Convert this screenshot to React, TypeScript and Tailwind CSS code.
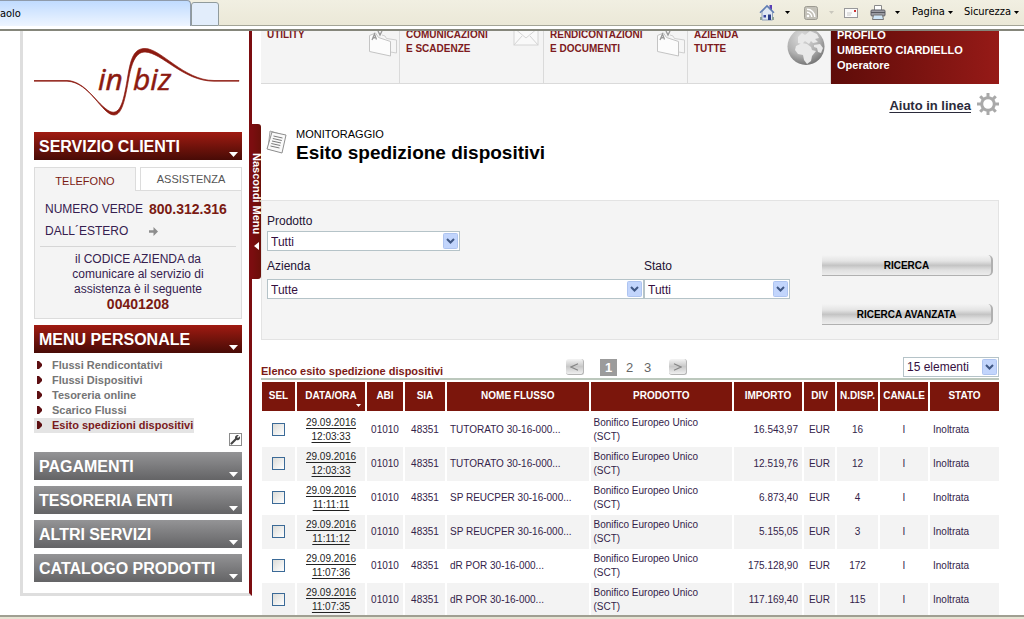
import React from "react";

const rows = [
  ["29.09.2016", "12:03:33", "TUTORATO 30-16-000...", "16.543,97", "16"],
  ["29.09.2016", "12:03:33", "TUTORATO 30-16-000...", "12.519,76", "12"],
  ["29.09.2016", "11:11:11", "SP REUCPER 30-16-000...", "6.873,40", "4"],
  ["29.09.2016", "11:11:12", "SP REUCPER 30-16-000...", "5.155,05", "3"],
  ["29.09.2016", "11:07:36", "dR POR 30-16-000...", "175.128,90", "172"],
  ["29.09.2016", "11:07:35", "dR POR 30-16-000...", "117.169,40", "115"],
];

function Caret({ className = "" }: { className?: string }) {
  return (
    <svg className={className} width="5" height="3" viewBox="0 0 5 3" aria-hidden="true">
      <path d="M0 0h5L2.5 3z" fill="currentColor" />
    </svg>
  );
}

function BrowserBar() {
  return (
    <header className="flex h-[31px] shrink-0 flex-col border-b-2 border-[#85867b] bg-white font-['DejaVu_Sans_Condensed','DejaVu_Sans',sans-serif] text-[11px] text-black">
      <div className="flex h-[26px] items-stretch bg-gradient-to-b from-[#f1efe2] to-[#ebe8d7]">
        <div className="flex w-[191px] items-center rounded-tr border-t border-r border-[#8f9bab] bg-gradient-to-b from-[#c0dbff] to-[#eef5ff] pt-[2px]">
          aolo
        </div>
        <button aria-label="Nuova scheda" className="mt-[2px] h-[24px] w-[28px] rounded-t-[3px] border border-[#919b9c] bg-[#e2edfb]" />
        <div className="flex flex-1 items-center justify-end border-b border-[#a3a497] pr-[5px]">
          <button aria-label="Pagina iniziale" className="flex items-center gap-[10px]">
            <svg width="16" height="17" viewBox="0 0 16 17">
              <path d="M10.5 1h2.500v5h-2.500z" fill="#5a3fb5" />
              <path d="M3 8l5-5.500L13.500 8v8H3z" fill="#dfe7f2" stroke="#8fa0b8" />
              <path d="M1 8.800L8 1.800l7 7" fill="none" stroke="#5f7db5" strokeWidth="1.500" />
              <path d="M4.500 11h2.500v2.500H4.500z" fill="#34439c" />
              <path d="M9 10.500h3V16H9z" fill="#2c3f87" />
              <path d="M1 13h2v3H1zM13 13h2v3h-2z" fill="#8fa396" />
            </svg>
            <Caret />
          </button>
          <button aria-label="Feed" className="ml-[14px] flex items-center gap-[11px]">
            <svg width="14" height="14" viewBox="0 0 14 14">
              <rect x=".5" y=".5" width="13" height="13" rx="2" fill="#c3c1b8" stroke="#9d9b92" />
              <circle cx="4" cy="10" r="1.300" fill="#fff" />
              <path d="M3 6.300A4.700 4.700 0 0 1 7.700 11M3 3.200A7.800 7.800 0 0 1 10.800 11" fill="none" stroke="#fff" strokeWidth="1.400" />
            </svg>
            <Caret className="text-[#c9c7bd]" />
          </button>
          <button aria-label="Leggi posta" className="ml-[10px]">
            <svg width="14" height="10" viewBox="0 0 14 10">
              <rect x=".5" y=".5" width="13" height="9" fill="#fbfbfb" stroke="#98989a" />
              <rect x="10" y="2" width="2" height="2" fill="#c33" />
              <path d="M3 5h5M3 7h4" stroke="#c8c8c8" />
            </svg>
          </button>
          <button aria-label="Stampa" className="ml-[12px] flex items-center gap-[9px]">
            <svg width="16" height="15" viewBox="0 0 16 15">
              <path d="M4.500 5V.500h7V5" fill="#fff" stroke="#8a8a8a" />
              <rect x="1" y="5" width="14" height="6" rx="1" fill="#9a9ba2" stroke="#5f6168" />
              <path d="M1 7.500h14" stroke="#55575e" />
              <path d="M3.500 10h9l1 4.500h-11z" fill="#cfe6f7" stroke="#777" />
            </svg>
            <Caret />
          </button>
          <button className="ml-[12px] flex items-center gap-[3px]">
            Pagina <Caret />
          </button>
          <button className="ml-[11px] flex items-center gap-[3px]">
            Sicurezza <Caret />
          </button>
        </div>
      </div>
    </header>
  );
}

function Logo() {
  return (
    <svg className="h-[101px] w-full" viewBox="0 0 208 101" role="img" aria-label="in biz">
      <path
        d="M-1 49.500H33C52 50 63 74 76 80.500C87 85 90 68 94 44C97 27 100 17.500 111 17.500C127 17.500 150 49.500 180 49.500H205V50.200H180C149 50.200 128 21.500 111 21C102 21 98 31 95 46C91 69 88 84 80 84C68 84 56 51 33 50.200H-1Z"
        fill="#8c1a10"
        stroke="#8c1a10"
        strokeWidth=".7"
      />
      <g
        fill="#8c1a10"
        stroke="#8c1a10"
        strokeWidth=".5"
        fontFamily="'Open Sans', 'Noto Sans', sans-serif"
        fontStyle="italic"
        fontSize="30"
      >
        <text x="64" y="59">in</text>
        <text x="99" y="59">biz</text>
      </g>
    </svg>
  );
}

function MenuHeader({ children, tone }: { children: React.ReactNode; tone: "red" | "gray" }) {
  const colors = tone === "red" ? "from-[#a11b12] to-[#480b06]" : "from-[#949496] to-[#646466]";
  return (
    <button className={`flex h-[28px] w-full items-center justify-between bg-gradient-to-b pt-px pr-[4px] pl-[5px] text-left text-[16px] font-bold text-white ${colors}`}>
      {children}
      <svg className="mb-[3px] self-end" width="9" height="5" viewBox="0 0 9 5" aria-hidden="true">
        <path d="M0 0h9L4.500 5z" fill="#fff" />
      </svg>
    </button>
  );
}

function Sidebar() {
  const links = ["Flussi Rendicontativi", "Flussi Dispositivi", "Tesoreria online", "Scarico Flussi"];
  return (
    <aside className="w-[232px] shrink-0 border-r-[3px] border-b-[3px] border-l-[3px] border-[#dedede] border-r-[#7c0d10] pr-[7px] pb-[11px] pl-[11px]">
      <Logo />
      <MenuHeader tone="red">SERVIZIO CLIENTI</MenuHeader>
      <section className="mt-[7px] text-[12px] text-[#35204f]">
        <div className="flex h-[24px] text-[11px]">
          <button className="w-[102px] border-t border-r border-l border-[#dcdcdc] bg-[#f4f4f4] pt-[3px] text-[#7a1a12]">TELEFONO</button>
          <div className="w-[4px] border-b border-[#dcdcdc]" />
          <button className="flex-1 border border-[#dcdcdc] bg-white text-[#555]">ASSISTENZA</button>
        </div>
        <div className="border-r border-b border-l border-[#dcdcdc] bg-[#f4f4f4] px-[5px] pt-[7px] pb-[5px]">
          <div className="flex h-[22px] items-center gap-[6px] pl-[5px]">
            NUMERO VERDE <strong className="text-[14px] text-[#7a1a12]">800.312.316</strong>
          </div>
          <div className="flex h-[22px] items-center pl-[5px]">
            <span className="w-[104px]">DALL´ESTERO</span>
            <svg width="9" height="9" viewBox="0 0 9 9" aria-hidden="true">
              <path d="M0 3.300h4.500V0L9 4.500 4.500 9V5.700H0z" fill="#8d8d8d" />
            </svg>
          </div>
          <p className="mt-[4px] border-t border-[#d6d6d6] pt-[5px] text-center leading-[15px]">
            il CODICE AZIENDA da
            <br />
            comunicare al servizio di
            <br />
            assistenza è il seguente
            <br />
            <strong className="text-[14px] text-[#7a1a12]">00401208</strong>
          </p>
        </div>
      </section>
      <div className="mt-[6px]">
        <MenuHeader tone="red">MENU PERSONALE</MenuHeader>
      </div>
      <ul className="mt-[5px] text-[11px] leading-[15px] font-bold text-[#757575]">
        {links.map((l) => (
          <li key={l} className="flex items-start pl-[3px]">
            <Bullet />
            <a href="#">{l}</a>
          </li>
        ))}
        <li className="flex w-fit items-start bg-[#e4e4e4] pr-[1px] pl-[3px] text-[#7a1a1c]">
          <Bullet />
          <a href="#" aria-current="page">Esito spedizioni dispositivi</a>
        </li>
      </ul>
      <div className="flex h-[19px] justify-end">
        <button aria-label="Personalizza menu" className="h-[13px]">
          <svg width="13" height="13" viewBox="0 0 13 13">
            <rect x=".5" y=".5" width="12" height="12" fill="#fff" stroke="#8c8c8c" />
            <path d="M2.500 10.500L7 6" stroke="#444" strokeWidth="2.200" strokeLinecap="round" />
            <path d="M10.800 3.200L9 5 8 4l1.800-1.800C8.300 1.400 6 2.300 6 4.600 6 6.600 8 7.600 9.500 7c1.400-.6 2-2.300 1.300-3.800z" fill="#444" />
          </svg>
        </button>
      </div>
      <nav className="flex flex-col gap-[6px]">
        <MenuHeader tone="gray">PAGAMENTI</MenuHeader>
        <MenuHeader tone="gray">TESORERIA ENTI</MenuHeader>
        <MenuHeader tone="gray">ALTRI SERVIZI</MenuHeader>
        <MenuHeader tone="gray">CATALOGO PRODOTTI</MenuHeader>
      </nav>
    </aside>
  );
}

function Bullet() {
  return (
    <svg className="mt-[3px] mr-[10px] shrink-0" width="5" height="8" viewBox="0 0 5 8" aria-hidden="true">
      <path d="M0 0h2L5 3v2L2 8H0z" fill="#5d0f12" />
    </svg>
  );
}

function FolderIcon() {
  return (
    <svg className="shrink-0" width="30" height="30" viewBox="0 0 30 30" aria-hidden="true">
      <path d="M14 7l3 1 1.500 2.500L28.500 12v13l-6-1" fill="#f6f6f6" stroke="#cfcfcf" />
      <path d="M1.500 7.500l6-2.500 3 4.500 12 4V28L1.500 23.500z" fill="#fcfcfc" stroke="#c4c4c4" />
      <path d="M4 12l2.500-6 2 5.500M5 10l3-.6M10 3l2 4 2-4" fill="none" stroke="#999" strokeWidth="1.300" />
    </svg>
  );
}

function EnvelopeIcon() {
  return (
    <svg className="shrink-0" width="26" height="20" viewBox="0 0 26 20" aria-hidden="true">
      <rect x="1" y="0" width="24" height="17" fill="#f9f9f9" stroke="#d4d4d4" />
      <path d="M1 0l12 10L25 0M1 17l8-9M25 17l-8-9" fill="none" stroke="#d4d4d4" />
    </svg>
  );
}

function GlobeIcon() {
  return (
    <svg width="38" height="38" viewBox="0 0 38 38" aria-hidden="true">
      <defs>
        <radialGradient id="globe" cx=".4" cy=".25" r=".8">
          <stop offset="0" stopColor="#dcdcdc" />
          <stop offset=".6" stopColor="#b0b0b0" />
          <stop offset="1" stopColor="#6d6d6d" />
        </radialGradient>
      </defs>
      <circle cx="19" cy="18.500" r="18.500" fill="url(#globe)" />
      <path d="M11 9l4-4 3 2 5-4 7 3 2 4-4 1 3 3-5 1-2-2-2 3-4-3-3 3-4-1zM9 18l6-3 5 1 4 3 1 3 4 1-4 5-1 5-4 3-3-4-1-5-5-1-3-4zM27 17l6-1 3 4-2 5-3-1-1-4-3-1z" fill="#e9e9e9" />
    </svg>
  );
}

function NavTile({ lines, icon, className }: { lines: string[]; icon?: React.ReactNode; className: string }) {
  return (
    <a href="#" className={`flex justify-between border-r border-b border-[#dadada] pl-[6px] ${className}`}>
      <span>
        {lines.map((l) => (
          <span key={l} className="block">{l}</span>
        ))}
      </span>
      {icon}
    </a>
  );
}

function TopNav() {
  return (
    <div className="-mt-[3px] flex h-[56px] overflow-hidden bg-[#f4f4f4] text-[10px] leading-[14px] font-bold text-[#7d1a20]">
      <NavTile lines={["UTILITY"]} icon={<FolderIcon />} className="w-[139px] pr-px" />
      <NavTile lines={["COMUNICAZIONI", "E SCADENZE"]} icon={<EnvelopeIcon />} className="w-[144px] pr-[4px]" />
      <NavTile lines={["RENDICONTAZIONI", "E DOCUMENTI"]} icon={<FolderIcon />} className="w-[144px] pr-px" />
      <NavTile lines={["AZIENDA", "TUTTE"]} icon={<GlobeIcon />} className="flex-1 pr-[5px]" />
      <div className="w-[168px] bg-gradient-to-r from-[#5e0c09] to-[#961a17] pl-[6px] text-[11px] leading-[15px] text-white">
        PROFILO
        <br />
        UMBERTO CIARDIELLO
        <br />
        Operatore
      </div>
    </div>
  );
}

function Select({ id, label, value, options, className = "" }: { id: string; label?: string; value: string; options: string[]; className?: string }) {
  return (
    <div className={`relative ${className}`}>
      <select
        id={id}
        aria-label={label}
        defaultValue={value}
        className="block h-[20px] w-full appearance-none border border-[#b5c3c8] bg-white pl-[3px] text-[12px] text-[#35103f]"
      >
        {options.map((o) => (
          <option key={o}>{o}</option>
        ))}
      </select>
      <svg className="pointer-events-none absolute top-[2px] right-[2px]" width="15" height="16" viewBox="0 0 15 16" aria-hidden="true">
        <rect x=".5" y=".5" width="14" height="15" rx="1" fill="#c2d5fc" stroke="#aec4f0" />
        <path d="M4 6l3.500 3.500L11 6" fill="none" stroke="#3f5784" strokeWidth="2" />
      </svg>
    </div>
  );
}

function SilverButton({ children }: { children: React.ReactNode }) {
  return (
    <button className="h-[21px] w-full rounded-r-[5px] border-r-2 border-b border-[#b0b0b0] bg-[linear-gradient(#f4f4f4,#e4e4e4_30%,#c4c4c4_52%,#e0e0e0_75%,#ececec)] pt-px text-[10px] font-bold text-black">
      {children}
    </button>
  );
}

function Filters() {
  return (
    <form className="mt-[36px] flex items-end border border-[#e3e3e3] bg-[#f4f4f4] pt-[10px] pr-[5px] pl-[5px] text-[12px] leading-[20px] text-[#231233]">
      <div className="flex-1 pb-[40px]">
        <label htmlFor="prodotto" className="block">Prodotto</label>
        <Select id="prodotto" value="Tutti" options={["Tutti"]} className="w-[193px]" />
        <div className="mt-[5px] flex">
          <div className="flex-1">
            <label htmlFor="azienda" className="block pb-[3px]">Azienda</label>
            <Select id="azienda" value="Tutte" options={["Tutte"]} />
          </div>
          <div className="w-[146px]">
            <label htmlFor="stato" className="block pb-[3px]">Stato</label>
            <Select id="stato" value="Tutti" options={["Tutti"]} />
          </div>
        </div>
      </div>
      <div className="ml-[32px] flex w-[171px] flex-col gap-[28px] pb-[14px]">
        <SilverButton>RICERCA</SilverButton>
        <SilverButton>RICERCA AVANZATA</SilverButton>
      </div>
    </form>
  );
}

function PagerArrow({ label, d }: { label: string; d: string }) {
  return (
    <button aria-label={label} className="flex h-[16px] w-[18px] items-center justify-center rounded-[3px] border-r border-b border-[#b5b5b5] bg-[linear-gradient(#f4f4f4,#c8c8c8_50%,#efefef)]">
      <svg width="9" height="8" viewBox="0 0 9 8">
        <path d={d} fill="none" stroke="#858585" strokeWidth="1.200" />
      </svg>
    </button>
  );
}

function Th({ children }: { children: React.ReactNode }) {
  return <th className="h-[31px] border-b-2 border-l-2 border-white bg-[#7b160c] p-0 text-center whitespace-nowrap first:border-l">{children}</th>;
}

function Results() {
  const cell = "h-[34px] border-l-2 border-white p-0 first:border-l";
  return (
    <section className="mt-[17px]">
      <div className="flex h-[23px] items-start border-b-2 border-[#bcc8bd]">
        <h2 className="w-[305px] pt-[7px] text-[11px] leading-[14px] font-bold text-[#7d1a16]">Elenco esito spedizione dispositivi</h2>
        <nav aria-label="Pagine" className="flex items-center gap-[16px] pt-[2px] text-[13px] leading-[17px] text-[#666]">
          <PagerArrow label="Pagina precedente" d="M8 .800L1 4l7 3.200" />
          <div className="flex gap-[7px]">
            <a href="#" aria-current="page" className="w-[17px] bg-[#9b9b9b] text-center font-bold text-white">1</a>
            <a href="#" className="w-[11px] text-center">2</a>
            <a href="#" className="w-[11px] text-center">3</a>
          </div>
          <PagerArrow label="Pagina successiva" d="M1 .800L8 4 1 7.200" />
        </nav>
        <Select id="elementi" label="Elementi per pagina" value="15 elementi" options={["15 elementi"]} className="ml-auto w-[96px]" />
      </div>
      <table className="mt-[2px] w-full table-fixed border-separate border-spacing-0 text-[10px] leading-[14px] text-[#33234a]">
        <colgroup>
          <col className="w-[34px]" />
          <col className="w-[70px]" />
          <col className="w-[38px]" />
          <col className="w-[42px]" />
          <col />
          <col />
          <col className="w-[70px]" />
          <col className="w-[33px]" />
          <col className="w-[43px]" />
          <col className="w-[50px]" />
          <col className="w-[71px]" />
        </colgroup>
        <thead className="text-white">
          <tr>
            <Th>SEL</Th>
            <Th>
              <button className="relative font-bold">
                DATA/ORA
                <Caret className="absolute -right-1 -bottom-1" />
              </button>
            </Th>
            <Th>ABI</Th>
            <Th>SIA</Th>
            <Th>NOME FLUSSO</Th>
            <Th>PRODOTTO</Th>
            <Th>IMPORTO</Th>
            <Th>DIV</Th>
            <Th>N.DISP.</Th>
            <Th>CANALE</Th>
            <Th>STATO</Th>
          </tr>
        </thead>
        <tbody>
          {rows.map(([date, time, name, amount, count]) => (
            <tr key={name + date + time + amount} className="even:bg-[#f3f3f3]">
              <td className={`${cell} text-center`}>
                <input
                  type="checkbox"
                  aria-label={`Seleziona ${name} ${time}`}
                  className="mx-auto block size-[13px] appearance-none border border-[#3b6a97] bg-gradient-to-br from-[#dcdcd8] to-white"
                />
              </td>
              <td className={`${cell} text-center text-[#222]`}>
                <a href="#" className="underline underline-offset-2">
                  {date}
                  <br />
                  {time}
                </a>
              </td>
              <td className={`${cell} text-center`}>01010</td>
              <td className={`${cell} text-center`}>48351</td>
              <td className={`${cell} pl-[3px]`}>{name}</td>
              <td className={`${cell} pl-[3px]`}>
                Bonifico Europeo Unico
                <br />
                (SCT)
              </td>
              <td className={`${cell} pr-[4px] text-right`}>{amount}</td>
              <td className={`${cell} text-center`}>EUR</td>
              <td className={`${cell} text-center`}>{count}</td>
              <td className={`${cell} text-center`}>I</td>
              <td className={`${cell} pl-[3px]`}>Inoltrata</td>
            </tr>
          ))}
        </tbody>
      </table>
    </section>
  );
}

export default function App() {
  return (
    <div className="flex h-screen flex-col overflow-hidden border-b-2 border-[#e6e3d3] bg-white font-['Liberation_Sans',Arial,sans-serif]">
      <BrowserBar />
      <div className="flex flex-1 items-start overflow-hidden border-b-2 border-[#a09f92] pr-[25px] pl-[20px]">
        <Sidebar />
        <button className="mt-[93px] flex h-[155px] w-[9px] shrink-0 items-center justify-center rounded-r-[3px] bg-gradient-to-r from-[#7c0d10] to-[#6a0f09] text-[11px] leading-[9px] font-bold text-white">
          <span className="flex items-center gap-[7px] whitespace-nowrap [writing-mode:vertical-rl]">
            Nascondi Menu
            <svg width="5" height="8" viewBox="0 0 5 8" aria-hidden="true">
              <path d="M5 0v8L0 4z" fill="#fff" />
            </svg>
          </span>
        </button>
        <main className="min-w-0 flex-1">
          <TopNav />
          <div className="mt-[9px] flex items-center justify-end gap-[6px]">
            <a href="#" className="pt-[3px] text-[13px] font-bold text-[#2b2b3b] underline underline-offset-2">Aiuto in linea</a>
            <svg width="22" height="22" viewBox="0 0 22 22" aria-hidden="true">
              <circle cx="11" cy="11" r="6.300" fill="none" stroke="#a9a9a9" strokeWidth="3" />
              <path
                d="M11 0v4M11 18v4M0 11h4M18 11h4M3.200 3.200l2.900 2.900M15.900 15.900l2.900 2.900M3.200 18.800l2.900-2.900M15.900 6.100l2.900-2.900"
                stroke="#a9a9a9"
                strokeWidth="3"
              />
            </svg>
          </div>
          <div className="mt-[11px] flex items-start gap-[9px] pl-[5px]">
            <svg className="mt-[3px]" width="21" height="24" viewBox="0 0 21 24" aria-hidden="true">
              <path d="M4 1l13 4-2 17-13-3z" fill="#eee" stroke="#a5a5a5" />
              <path d="M6 2l14 3-4 18L1 19z" fill="#fafafa" stroke="#8f8f8f" />
              <path d="M7.500 6l9 2M6.800 8.500l9 2M6 11l9 2M5.300 13.500l9 2M4.500 16l9 2" stroke="#7c7c7c" />
            </svg>
            <h1 className="text-black">
              <span className="block text-[11px] leading-[15px] font-normal">MONITORAGGIO</span>
              <span className="block text-[19px] leading-[22px] font-bold">Esito spedizione dispositivi</span>
            </h1>
          </div>
          <Filters />
          <Results />
        </main>
      </div>
    </div>
  );
}
